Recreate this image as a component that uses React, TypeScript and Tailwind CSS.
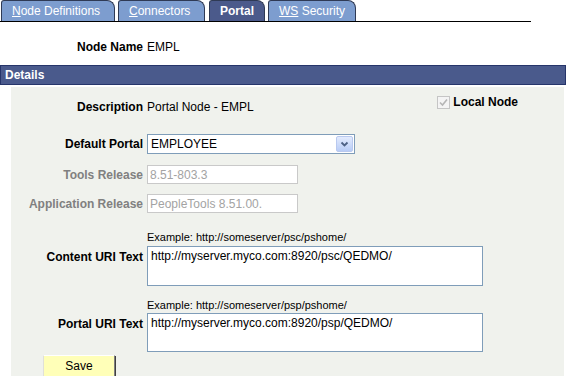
import React from "react";

const TABS = [
  { key: "N", rest: "ode Definitions", w: "w-[114px]", ml: "ml-[1px]" },
  { key: "C", rest: "onnectors", w: "w-[87px]", ml: "ml-[3px]" },
  { key: "", rest: "Portal", w: "w-[56px]", ml: "ml-[4px]", active: true },
  { key: "WS", rest: "\u00a0Security", w: "w-[88px]", ml: "ml-[3px]" },
];

function Label({ children, muted }: { children: React.ReactNode; muted?: boolean }) {
  return (
    <div className={`w-[132px] shrink-0 text-right font-bold ${muted ? "text-[#808080]" : "text-black"}`}>
      {children}
    </div>
  );
}

export default function App() {
  return (
    <div className="relative w-[566px] h-[376px] overflow-hidden bg-white font-['Liberation_Sans',Arial,sans-serif] text-[12px] leading-[14px] text-black">
      {/* tab strip */}
      <div className="flex items-end h-[22px] w-[531px] border-b border-black">
        {TABS.map((t) => (
          <div
            key={t.rest}
            className={`${t.w} ${t.ml} h-[21px] pl-[10px] leading-[20px] whitespace-pre border border-b-0 border-[#2f3a55] rounded-tl-[3px] rounded-tr-[8px] text-white text-[12px] ${
              t.active ? "bg-[#4b5a8b] font-bold pl-[9px]" : "bg-[#7d9dcf]"
            }`}
          >
            {t.key && <span className="underline">{t.key}</span>}
            {t.rest}
          </div>
        ))}
      </div>

      {/* node name */}
      <div className="flex mt-[18px] ml-[11px]">
        <Label>Node Name</Label>
        <div className="ml-[4px]">EMPL</div>
      </div>

      {/* details header */}
      <div className="mt-[11px] h-[20px] bg-[#4a5a8c] border border-[#26356a] flex items-center pl-[4px] text-white font-bold">
        Details
      </div>

      {/* details body */}
      <div className="mt-[2px] ml-[11px] w-[553px] h-[300px] bg-[#f0f2ed] pt-[13px] flex flex-col">
        <div className="flex items-start">
          <Label>Description</Label>
          <div className="ml-[4px]">Portal Node - EMPL</div>
          <div className="ml-auto mr-[46px] -mt-[5px] flex items-center gap-[2px] font-bold">
            <span className="w-[13px] h-[13px] border border-[#c5c5c5] bg-[#f4f4f4] flex items-center justify-center">
              <svg width="9" height="9" viewBox="0 0 9 9">
                <path d="M1 4.5 L3.5 7 L8 1.5" stroke="#b5b5b5" strokeWidth="1.6" fill="none" />
              </svg>
            </span>
            <span className="ml-[1px]">Local Node</span>
          </div>
        </div>

        <div className="flex items-center mt-[20px]">
          <Label>Default Portal</Label>
          <div className="ml-[4px] w-[208px] h-[20px] border border-[#7f9db9] bg-white flex items-center">
            <span className="pl-[3px]">EMPLOYEE</span>
            <span className="ml-auto mr-[1px] w-[17px] h-[16px] rounded-[2px] border border-[#b9c9ef] bg-gradient-to-b from-[#e3ebfd] to-[#b8ccf6] flex items-center justify-center">
              <svg width="9" height="7" viewBox="0 0 9 7">
                <path d="M1.5 1.5 L4.5 4.5 L7.5 1.5" stroke="#4d6185" strokeWidth="1.8" fill="none" />
              </svg>
            </span>
          </div>
        </div>

        <div className="flex items-center mt-[11px]">
          <Label muted>Tools Release</Label>
          <div className="ml-[4px] w-[151px] h-[19px] border border-[#c9c9c9] bg-white pl-[2px] text-[#a3a3a3] flex items-center">
            8.51-803.3
          </div>
        </div>

        <div className="flex items-center mt-[10px]">
          <Label muted>Application Release</Label>
          <div className="ml-[4px] w-[151px] h-[19px] border border-[#c9c9c9] bg-white pl-[2px] text-[#a3a3a3] flex items-center">
            PeopleTools 8.51.00.
          </div>
        </div>

        <div className="mt-[17px] ml-[136px] text-[11px] leading-[14px]">
          Example: http://someserver/psc/pshome/
        </div>
        <div className="flex items-start mt-[2px]">
          <div className="pt-[4px]">
            <Label>Content URI Text</Label>
          </div>
          <div className="ml-[4px] w-[336px] h-[40px] border border-[#7f9db9] bg-white pl-[3px] pt-[2px]">
            http://myserver.myco.com:8920/psc/QEDMO/
          </div>
        </div>

        <div className="mt-[12px] ml-[136px] text-[11px] leading-[14px]">
          Example: http://someserver/psp/pshome/
        </div>
        <div className="flex items-start mt-[1px]">
          <div className="pt-[4px]">
            <Label>Portal URI Text</Label>
          </div>
          <div className="ml-[4px] w-[336px] h-[39px] border border-[#7f9db9] bg-white pl-[3px] pt-[2px]">
            http://myserver.myco.com:8920/psp/QEDMO/
          </div>
        </div>

        <div className="mt-[3px] ml-[32px]">
          <button className="w-[72px] h-[22px] bg-[#ffffb8] border border-t-[#ffffff] border-l-[#e0e0d8] border-r-[#808080] border-b-[#808080] shadow-[1px_1px_0_#404040] text-[12px] text-black">
            Save
          </button>
        </div>
      </div>
    </div>
  );
}
